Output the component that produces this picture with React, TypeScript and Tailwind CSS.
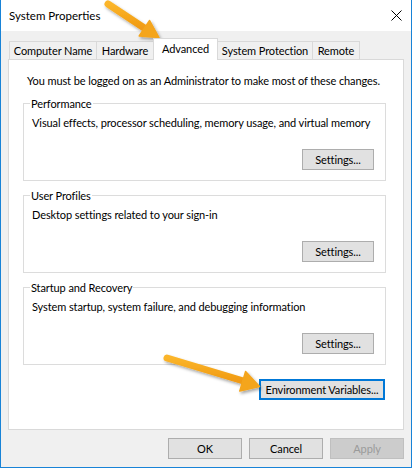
import React from 'react';

const tabs = [
  { label: 'Computer Name', w: 'w-[88px]' },
  { label: 'Hardware', w: 'w-[58px]' },
  { label: 'Advanced', w: 'w-[65px]', active: true },
  { label: 'System Protection', w: 'w-[96px]' },
  { label: 'Remote', w: 'w-[48px]' },
];

const groups = [
  { title: 'Performance', text: 'Visual effects, processor scheduling, memory usage, and virtual memory' },
  { title: 'User Profiles', text: 'Desktop settings related to your sign-in' },
  { title: 'Startup and Recovery', text: 'System startup, system failure, and debugging information' },
];

const WinButton: React.FC<{ children: React.ReactNode; className?: string; disabled?: boolean }> = ({
  children,
  className = '',
  disabled,
}) => (
  <button
    type="button"
    disabled={disabled}
    className={`flex items-center justify-center h-[21px] border whitespace-nowrap ${
      disabled ? 'bg-[#cccccc] border-[#bfbfbf] text-[#9a9a9a]' : 'bg-[#e1e1e1] border-[#adadad] text-black'
    } ${className}`}
  >
    {children}
  </button>
);

// orange callout arrows drawn on top of the dialog
const Arrows = () => (
  <svg className="absolute inset-0 pointer-events-none" width={412} height={468} viewBox="0 0 412 468">
    <defs>
      <filter id="arrowShadow" x="-20%" y="-20%" width="140%" height="140%">
        <feDropShadow dx="1.5" dy="2" stdDeviation="1.5" floodColor="#000" floodOpacity="0.35" />
      </filter>
      <linearGradient id="arrowFill" x1="0" y1="0" x2="0" y2="1">
        <stop offset="0" stopColor="#fbb52a" />
        <stop offset="1" stopColor="#f09a12" />
      </linearGradient>
    </defs>
    <g filter="url(#arrowShadow)">
      <line x1="107" y1="4" x2="144" y2="28.5" stroke="url(#arrowFill)" strokeWidth="7" strokeLinecap="round" />
      <polygon points="158,37.5 138.2,36 148.6,20.5" fill="#f4a51c" stroke="#f4a51c" strokeWidth="1.5" strokeLinejoin="round" />
    </g>
    <g filter="url(#arrowShadow)">
      <line x1="166" y1="358" x2="242.5" y2="381" stroke="url(#arrowFill)" strokeWidth="7" strokeLinecap="round" />
      <polygon points="258.5,386.5 238.8,391 244.6,371.5" fill="#f4a51c" stroke="#f4a51c" strokeWidth="1.5" strokeLinejoin="round" />
    </g>
  </svg>
);

export default function App() {
  return (
    <div className="relative w-[412px] h-[468px] flex flex-col border-l border-r border-b border-[#1883d7] bg-[#f0f0f0] font-['Lato',sans-serif] text-[11px] tracking-[-0.1px] leading-[15px] text-black whitespace-nowrap overflow-hidden">
      {/* title bar */}
      <div className="h-[31px] shrink-0 bg-white flex items-center justify-between pl-[8px] pr-[9px]">
        <span className="text-[11.5px] tracking-normal">System Properties</span>
        <svg width="11" height="11" viewBox="0 0 11 11">
          <path d="M0.5 0.5 L10.5 10.5 M10.5 0.5 L0.5 10.5" stroke="#000" strokeWidth="1" />
        </svg>
      </div>

      <div className="flex-1 flex flex-col pt-[7px] pl-[7px] pr-[7px]">
        {/* tab strip */}
        <div className="flex items-end h-[21px] pl-[1px]">
          {tabs.map((t, i) =>
            t.active ? (
              <div
                key={t.label}
                className={`${t.w} h-[22px] -mb-px -ml-px relative z-10 bg-white border-l border-r border-t border-[#d9d9d9] flex items-center justify-center pb-[2px]`}
              >
                {t.label}
              </div>
            ) : (
              <div
                key={t.label}
                className={`${t.w} h-[18px] ${i === 0 ? '' : '-ml-px'} bg-[#f0f0f0] border-l border-r border-t border-[#d9d9d9] flex items-center justify-center`}
              >
                {t.label}
              </div>
            ),
          )}
        </div>

        {/* tab page */}
        <div className="w-[396px] h-[371px] bg-white border border-[#d9d9d9] pt-[13px] flex flex-col">
          <p className="pl-[18px]">You must be logged on as an Administrator to make most of these changes.</p>

          <div className="mt-[8px] ml-[14px] w-[363px] flex flex-col gap-[7px]">
            {groups.map((g) => (
              <fieldset key={g.title} className="min-w-0 border border-[#dcdcdc] px-0 pb-[10px]">
                <legend className="ml-[6px] px-[1px]">{g.title}</legend>
                <p className="mt-[4px] pl-[8px]">{g.text}</p>
                <div className="mt-[19px] flex justify-end pr-[11px]">
                  <WinButton className="w-[72px]">Settings...</WinButton>
                </div>
              </fieldset>
            ))}
          </div>

          <div className="mt-[14px] flex justify-end pr-[18px]">
            <WinButton className="w-[126px] h-[20px] border-2 !border-[#0078d7]">Environment Variables...</WinButton>
          </div>
        </div>

        {/* dialog buttons */}
        <div className="mt-[8px] flex justify-end gap-[7px]">
          <WinButton className="w-[74px]">OK</WinButton>
          <WinButton className="w-[74px]">Cancel</WinButton>
          <WinButton className="w-[74px]" disabled>
            Apply
          </WinButton>
        </div>
      </div>

      <Arrows />
    </div>
  );
}
